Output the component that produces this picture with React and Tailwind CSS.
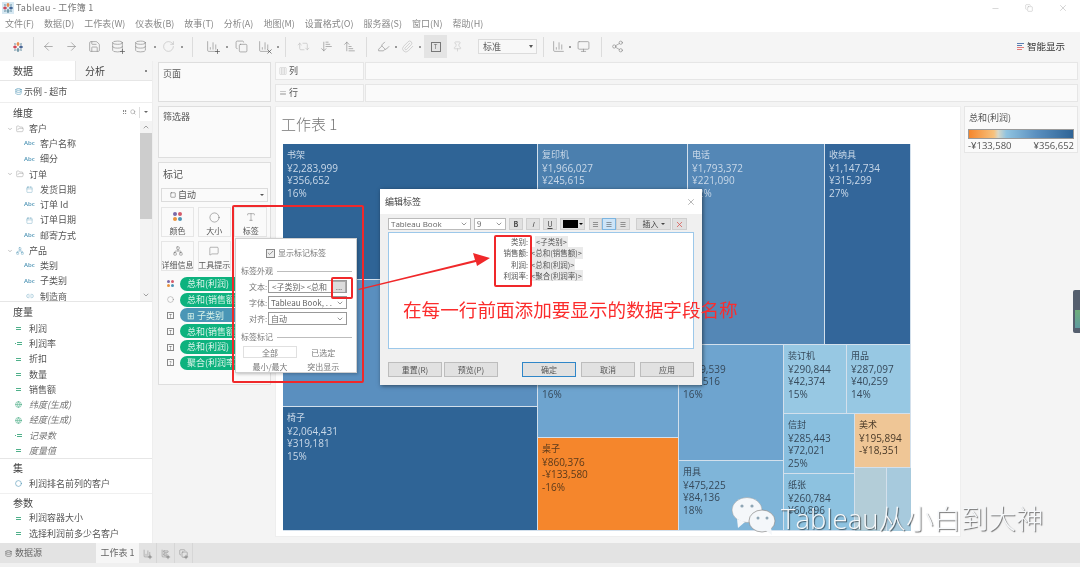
import React from 'react';
import {
  ArrowLeft, ArrowRight, Save, Database, RotateCw, Copy, Repeat2, ArrowDownNarrowWide,
  ArrowUpNarrowWide, Highlighter, Paperclip, Pin, Monitor, Share2, ChevronDown, ChevronUp, FolderOpen, Calendar, Link2,
  Globe, Search, X, Minus, Square, Check, Type, ChartColumn, ChartBarBig, Circle, MessageSquare, Network, Plus,
} from 'lucide-react';

const menus = ['文件(F)', '数据(D)', '工作表(W)', '仪表板(B)', '故事(T)', '分析(A)', '地图(M)', '设置格式(O)', '服务器(S)', '窗口(N)', '帮助(H)'];

const Logo = () => (
  <svg width="12" height="12" viewBox="0 0 12 12" strokeWidth="1.2" fill="none">
    <path d="M6 1v4M4.5 3h3" stroke="#e8762d" />
    <path d="M6 7v4M4.5 9h3" stroke="#5b879b" />
    <path d="M1 6h4M3 4.5v3" stroke="#c72035" />
    <path d="M7 6h4M9 4.5v3" stroke="#1f447e" />
    <path d="M2.5 2.5l1 1M9.5 2.5l-1 1M2.5 9.5l1-1M9.5 9.5l-1-1" stroke="#59879b" />
  </svg>
);

const Tool = ({ icon: Icon, className = 'w-[23px]', size = 13, plus, cross }) => (
  <div className={`relative flex items-center justify-center ${className}`}>
    <Icon size={size} strokeWidth={1.2} className="text-[#8a8a8a]" />
    {plus && <Plus size={7} strokeWidth={2.4} className="absolute right-[3px] bottom-[-2px] text-[#555]" />}
    {cross && <X size={7} strokeWidth={2.4} className="absolute right-[3px] bottom-[-2px] text-[#555]" />}
  </div>
);
const Dot = ({ className = 'w-[6px]' }) => (
  <div className={`flex items-center justify-center ${className}`}>
    <div className="w-[2px] h-[2px] bg-[#999]" />
  </div>
);
const Sep = ({ className = '' }) => <div className={`w-px h-[20px] bg-[#dcdcdc] ${className}`} />;

const Toolbar = () => (
  <div className="flex items-center h-[29px] bg-[#f5f5f5] pl-[12px]">
    <div className="w-[17px] flex items-center"><Logo /></div>
    <Sep className="ml-[4px] mr-[3px]" />
    <Tool icon={ArrowLeft} />
    <Tool icon={ArrowRight} />
    <Tool icon={Save} />
    <Tool icon={Database} plus />
    <Tool icon={Database} />
    <Dot />
    <Tool icon={RotateCw} className="w-[20px] opacity-50" />
    <Dot className="w-[8px]" />
    <Sep className="mx-[6px]" />
    <Tool icon={ChartColumn} className="w-[24px] ml-px" plus />
    <Dot />
    <Tool icon={Copy} />
    <Tool icon={ChartColumn} cross />
    <Dot className="w-[4px]" />
    <Sep className="mx-[5px]" />
    <Tool icon={Repeat2} className="w-[24px] opacity-50" />
    <Tool icon={ArrowDownNarrowWide} />
    <Tool icon={ArrowUpNarrowWide} />
    <Sep className="mx-[5px]" />
    <Tool icon={Highlighter} className="w-[22px]" />
    <Dot className="w-[4px]" />
    <Tool icon={Paperclip} className="w-[18px] opacity-50" />
    <Dot className="w-[8px]" />
    <div className="w-[23px] h-[23px] bg-[#e4e4e4] flex items-center justify-center">
      <div className="w-[10px] h-[10px] border border-[#777] flex items-center justify-center text-[6px] leading-none text-[#666]">T</div>
    </div>
    <Tool icon={Pin} className="w-[20px] opacity-50" size={11} />
    <div className="ml-[11px] w-[59px] h-[15px] border border-[#dcdcdc] bg-[#f8f8f8] flex items-center justify-between pl-[4px] pr-[3px] text-[9px] text-[#555]">
      标准
      <span className="w-0 h-0 border-x-[2px] border-x-transparent border-t-[3px] border-t-[#555]" />
    </div>
    <Sep className="ml-[6px] mr-[6px]" />
    <Tool icon={ChartColumn} className="w-[17px]" />
    <Dot className="w-[6px]" />
    <Tool icon={Monitor} className="w-[20px]" />
    <Sep className="ml-[8px] mr-[6px]" />
    <Tool icon={Share2} className="w-[18px]" />
    <div className="ml-auto mr-[15px] flex items-center gap-[3px] text-[9.5px] text-[#333]">
      <div className="flex flex-col gap-px w-[7px]">
        <div className="h-px w-full bg-[#5b7db0]" />
        <div className="h-px w-[5px] bg-[#5b7db0]" />
        <div className="h-px w-full bg-[#e27c7c]" />
        <div className="h-px w-[5px] bg-[#e27c7c]" />
      </div>
      智能显示
    </div>
  </div>
);

const AbcIcon = () => <span className="text-[6px] font-semibold font-['Open_Sans',sans-serif] text-[#4e94b5] w-[11px]">Abc</span>;
const DateIcon = () => <span className="w-[11px] flex justify-center"><Calendar size={7} strokeWidth={1.2} className="text-[#4e94b5]" /></span>;
const NumIcon = ({ calc }) => (
  <span className="w-[11px] flex justify-center items-center gap-px">
    {calc && <span className="w-px h-px bg-[#4fb08a]" />}
    <span className="flex flex-col gap-px"><span className="block w-[5px] h-px bg-[#4fb08a]" /><span className="block w-[5px] h-px bg-[#4fb08a]" /></span>
  </span>
);

const Group = ({ icon, label }) => (
  <div className="flex items-center h-[15.25px] pl-[7px] gap-[3px]">
    <ChevronDown size={6} className="text-[#888]" />
    {icon}
    <span className="ml-[2px]">{label}</span>
  </div>
);
const Field = ({ icon, label }) => (
  <div className="flex items-center h-[15.25px] pl-[24px] gap-[5px]">
    {icon}
    <span>{label}</span>
  </div>
);
const Measure = ({ icon, label, italic }) => (
  <div className={`flex items-center h-[15.25px] pl-[13px] gap-[5px] ${italic ? 'italic text-[#777]' : ''}`}>
    {icon}
    <span>{label}</span>
  </div>
);

const Sidebar = () => (
  <div className="w-[153px] h-full bg-white flex flex-col text-[9px] text-[#555] border-r border-[#eeeeee]">
    <div className="flex h-[20px] text-[10px] text-[#444] border-b border-[#e6e6e6] shrink-0">
      <div className="w-[75px] pl-[13px] flex items-center bg-white">数据</div>
      <div className="flex-1 pl-[9px] pr-[5px] flex items-center justify-between bg-[#f5f5f5] border-l border-[#e6e6e6]">
        分析
        <span className="w-[2px] h-[2px] bg-[#888]" />
      </div>
    </div>
    <div className="flex items-center h-[22px] pl-[15px] gap-[2px] border-b border-[#eeeeee] shrink-0">
      <Database size={7} className="text-[#4e94b5]" />
      示例 - 超市
    </div>
    <div className="flex items-center justify-between h-[18px] pl-[13px] pr-[3px] text-[10px] text-[#444] shrink-0">
      维度
      <div className="flex items-center gap-[3px] text-[#888]">
        <span className="text-[7px]">⠿</span>
        <Search size={6} />
        <span className="w-px h-[11px] bg-[#ddd]" />
        <span className="w-0 h-0 border-x-[2px] border-x-transparent border-t-[2px] border-t-[#666] mx-px" />
      </div>
    </div>
    <div className="flex h-[181px] border-b border-[#e6e6e6] overflow-hidden shrink-0">
      <div className="flex-1">
        <Group icon={<FolderOpen size={8} strokeWidth={1.2} className="text-[#888]" />} label="客户" />
        <Field icon={<AbcIcon />} label="客户名称" />
        <Field icon={<AbcIcon />} label="细分" />
        <Group icon={<FolderOpen size={8} strokeWidth={1.2} className="text-[#888]" />} label="订单" />
        <Field icon={<DateIcon />} label="发货日期" />
        <Field icon={<AbcIcon />} label="订单 Id" />
        <Field icon={<DateIcon />} label="订单日期" />
        <Field icon={<AbcIcon />} label="邮寄方式" />
        <Group icon={<Network size={8} strokeWidth={1.2} className="text-[#4e94b5]" />} label="产品" />
        <Field icon={<AbcIcon />} label="类别" />
        <Field icon={<AbcIcon />} label="子类别" />
        <Field icon={<span className="w-[11px] flex justify-center"><Link2 size={8} strokeWidth={1.2} className="text-[#4e94b5]" /></span>} label="制造商" />
      </div>
      <div className="w-[12px] bg-[#f3f3f3] flex flex-col items-center justify-between text-[#777]">
        <div className="w-full flex flex-col items-center">
          <ChevronUp size={8} className="my-[2px]" />
          <div className="w-full h-[86px] bg-[#cdcdcd]" />
        </div>
        <ChevronDown size={8} className="mb-[2px]" />
      </div>
    </div>
    <div className="flex items-center h-[18px] pl-[13px] text-[10px] text-[#444] shrink-0">度量</div>
    <div className="mt-px">
      <Measure icon={<NumIcon />} label="利润" />
      <Measure icon={<NumIcon calc />} label="利润率" />
      <Measure icon={<NumIcon />} label="折扣" />
      <Measure icon={<NumIcon />} label="数量" />
      <Measure icon={<NumIcon />} label="销售额" />
      <Measure italic icon={<span className="w-[11px] flex justify-center"><Globe size={7} className="text-[#4fb08a]" /></span>} label="纬度(生成)" />
      <Measure italic icon={<span className="w-[11px] flex justify-center"><Globe size={7} className="text-[#4fb08a]" /></span>} label="经度(生成)" />
      <Measure italic icon={<NumIcon calc />} label="记录数" />
      <Measure italic icon={<NumIcon />} label="度量值" />
    </div>
    <div className="border-t border-[#e6e6e6] h-[18px] pl-[13px] flex items-center text-[10px] text-[#444] shrink-0">集</div>
    <Measure icon={<span className="w-[11px] flex justify-center"><Circle size={7} className="text-[#4e94b5]" /></span>} label="利润排名前列的客户" />
    <div className="border-t border-[#f0f0f0] h-[18px] mt-px pl-[13px] flex items-center text-[10px] text-[#444] shrink-0">参数</div>
    <Measure icon={<NumIcon />} label="利润容器大小" />
    <Measure icon={<NumIcon />} label="选择利润前多少名客户" />
  </div>
);

const MarkBtn = ({ children, label }) => (
  <div className="flex flex-col items-center justify-between h-[30px] w-[33px] border border-[#e6e6e6] pt-[4px] text-[8px] leading-[11px] text-[#555]">
    {children}
    <span className="whitespace-nowrap">{label}</span>
  </div>
);

const Pill = ({ icon, label, blue }) => (
  <div className="flex items-center h-[15.8px]">
    <div className="w-[19px] flex justify-center">{icon}</div>
    <div className={`w-[87px] h-[14px] rounded-l-[7px] pl-[7px] flex items-center text-[9px] text-[#d8f2e8] whitespace-nowrap overflow-hidden ${blue ? 'bg-[#4a96b6]' : 'bg-[#0db27e]'}`}>{label}</div>
  </div>
);
const TBox = ({ ch = 'T' }) => <div className="w-[7px] h-[7px] border border-[#888] text-[5px] leading-[5px] text-center text-[#666]">{ch}</div>;

const Swatches = ({ size = 'w-[4px] h-[4px]' }) => (
  <div className="grid grid-cols-2 gap-px">
    <span className={`${size} rounded-full bg-[#7a6aa8]`} />
    <span className={`${size} rounded-full bg-[#d55a6a]`} />
    <span className={`${size} rounded-full bg-[#e8923c]`} />
    <span className={`${size} rounded-full bg-[#4e94b5]`} />
  </div>
);

const MiddleCol = () => (
  <div className="w-[122px] h-full bg-[#f4f4f4] pl-[5px] pr-[4px] pt-px flex flex-col gap-[4px]">
    <div className="h-[40px] border border-[#dedede] bg-[#fafafa] pl-[4px] pt-[4px] text-[9px] text-[#555]">页面</div>
    <div className="h-[52px] border border-[#dedede] bg-[#fafafa] pl-[4px] pt-[3px] text-[9px] text-[#555]">筛选器</div>
    <div className="h-[223px] border border-[#dedede] bg-[#fafafa] px-[2px] pt-[4px] text-[9px] text-[#555]">
      <div className="pl-[2px] text-[10px] leading-[14px]">标记</div>
      <div className="mt-[7px] h-[14px] border border-[#dcdcdc] flex items-center justify-between pl-[8px] pr-[3px]">
        <span className="flex items-center gap-[2px]"><Square size={6} />自动</span>
        <span className="w-0 h-0 border-x-[2px] border-x-transparent border-t-[2px] border-t-[#555]" />
      </div>
      <div className="mt-[5px] grid grid-cols-3 gap-x-[3px] gap-y-[4px]">
        <MarkBtn label="颜色"><Swatches /></MarkBtn>
        <MarkBtn label="大小"><Circle size={11} strokeWidth={1} /></MarkBtn>
        <MarkBtn label="标签"><Type size={10} strokeWidth={1} /></MarkBtn>
        <MarkBtn label="详细信息"><Network size={10} strokeWidth={1} /></MarkBtn>
        <MarkBtn label="工具提示"><MessageSquare size={10} strokeWidth={1} /></MarkBtn>
      </div>
      <div className="mt-[5px] flex flex-col">
        <Pill icon={<Swatches size="w-[3px] h-[3px]" />} label="总和(利润)" />
        <Pill icon={<Circle size={7} strokeWidth={1} />} label="总和(销售额)" />
        <Pill blue icon={<TBox />} label="⊞ 子类别" />
        <Pill icon={<TBox />} label="总和(销售额)" />
        <Pill icon={<TBox />} label="总和(利润)" />
        <Pill icon={<TBox ch="?" />} label="聚合(利润率)" />
      </div>
    </div>
  </div>
);

const Shelf = ({ icon, label }) => (
  <div className="flex h-[18px] gap-px">
    <div className="w-[89px] bg-[#fafafa] border border-[#e6e6e6] flex items-center pl-[3px] gap-[2px] text-[9px] text-[#555]">
      <span className="text-[8px] text-[#999]">{icon}</span>
      {label}
    </div>
    <div className="flex-1 bg-[#fafafa] border border-[#e6e6e6]" />
  </div>
);

const tileText = {
  light: 'text-[#c9d8e8]',
  dark: 'text-[#36495a]',
  orange: 'text-[#5a3a1c]',
  tan: 'text-[#4a3a28]',
};

const Tile = ({ className, lines = [], tone = 'light' }) => (
  <div className={`border-r border-b border-[#d3e0ec] pl-[4px] pt-[5px] leading-[12.5px] text-[10px] font-['Open_Sans','Noto_Sans_CJK_SC',sans-serif] overflow-hidden whitespace-nowrap ${tileText[tone]} ${className}`}>
    {lines.map((t, i) => (
      <div key={i} className={i === 0 ? "text-[9px] font-['Noto_Sans_CJK_SC',sans-serif]" : ''}>{t || '\u00a0'}</div>
    ))}
  </div>
);

const Treemap = () => (
  <div className="flex w-[628px] h-[387px]">
    <div className="w-[255px] flex flex-col">
      <Tile className="h-[136px] bg-[#2f6496]" lines={['书架', '¥2,283,999', '¥356,652', '16%']} />
      <Tile className="h-[127px] bg-[#5a8fbf]" />
      <Tile className="h-[124px] bg-[#2f6496]" lines={['椅子', '¥2,064,431', '¥319,181', '15%']} />
    </div>
    <div className="flex-1 flex flex-col">
      <div className="flex h-[201px]">
        <Tile className="w-[150px] bg-[#4b7fae]" lines={['复印机', '¥1,966,027', '¥245,615', '12%']} />
        <Tile className="w-[137px] bg-[#5487b6]" lines={['电话', '¥1,793,372', '¥221,090', '12%']} />
        <Tile className="w-[86px] bg-[#33669a]" lines={['收纳具', '¥1,147,734', '¥315,299', '27%']} />
      </div>
      <div className="flex flex-1">
        <div className="w-[141px] flex flex-col">
          <Tile tone="dark" className="h-[93px] bg-[#6ea4cf]" lines={['', '', '', '16%']} />
          <Tile tone="orange" className="flex-1 bg-[#f5862c]" lines={['桌子', '¥860,376', '-¥133,580', '-16%']} />
        </div>
        <div className="w-[105px] flex flex-col">
          <Tile tone="dark" className="h-[116px] bg-[#6ea4cf]" lines={['', '¥499,539', '¥80,516', '16%']} />
          <Tile tone="dark" className="flex-1 bg-[#7fb5d9]" lines={['用具', '¥475,225', '¥84,136', '18%']} />
        </div>
        <div className="flex-1 flex flex-col">
          <div className="flex h-[69px]">
            <Tile tone="dark" className="w-[63px] bg-[#97c8e3]" lines={['装订机', '¥290,844', '¥42,374', '15%']} />
            <Tile tone="dark" className="flex-1 bg-[#97c8e3]" lines={['用品', '¥287,097', '¥40,259', '14%']} />
          </div>
          <div className="flex flex-1">
            <div className="w-[71px] flex flex-col">
              <Tile tone="dark" className="h-[60px] bg-[#89bfdf]" lines={['信封', '¥285,443', '¥72,021', '25%']} />
              <Tile tone="dark" className="flex-1 bg-[#8dc2e0]" lines={['纸张', '¥260,784', '¥60,896', '']} />
            </div>
            <div className="flex-1 flex flex-col">
              <Tile tone="tan" className="h-[54px] bg-[#efc696]" lines={['美术', '¥195,894', '-¥18,351', '']} />
              <div className="flex flex-1">
                <div className="w-[32px] bg-[#b3cdd8] border-r border-[#d3e0ec]" />
                <div className="flex-1 bg-[#a7cadd]" />
              </div>
            </div>
          </div>
        </div>
      </div>
    </div>
  </div>
);

const Workspace = () => (
  <div className="flex-1 h-full bg-[#f4f4f4] pt-px pr-[2px] flex flex-col gap-[4px]">
    <Shelf icon="▥" label="列" />
    <Shelf icon="≡" label="行" />
    <div className="flex gap-[3px] flex-1 mb-[6px]">
      <div className="w-[686px] bg-white pl-[7px] pt-[7px] border border-[#eeeeee]">
        <div className="text-[15px] leading-[20px] h-[28px] font-light text-[#777] font-['Noto_Sans_CJK_SC',sans-serif] -ml-[2px] mb-[2px]">工作表 1</div>
        <Treemap />
      </div>
      <div className="flex-1 h-[47px] bg-[#fafafa] border border-[#e6e6e6] px-[3px] pt-[5px] text-[9px] text-[#555]">
        <div className="leading-[12px] pl-px">总和(利润)</div>
        <div className="mt-[5px] h-[10px] border border-[#9a9a9a] bg-[linear-gradient(90deg,#f5862c_0%,#f7c27e_24%,#d8d8c8_28%,#8fc3e0_36%,#5a8fbf_65%,#2f6496_100%)]" />
        <div className="flex justify-between leading-[12px] mt-px text-[9.5px] font-['Open_Sans',sans-serif]">
          <span>-¥133,580</span>
          <span>¥356,652</span>
        </div>
      </div>
    </div>
  </div>
);

const BottomBar = () => (
  <div className="h-[24px] shrink-0 bg-[#f0f0f0]">
    <div className="h-[20px] bg-[#e3e3e3] flex items-stretch text-[9px] text-[#666]">
      <div className="w-[96px] flex items-center pl-[5px] gap-[3px]"><Database size={7} />数据源</div>
      <div className="w-[43px] bg-[#f6f6f6] flex items-center justify-center">工作表 1</div>
      {[ChartColumn, ChartBarBig, Copy].map((I, i) => (
        <div key={i} className="relative w-[18px] border-r border-[#d6d6d6] flex items-center justify-center">
          <I size={9} strokeWidth={1.2} className="text-[#777]" />
          <Plus size={6} strokeWidth={2.2} className="absolute right-[3px] bottom-[3px] text-[#666]" />
        </div>
      ))}
    </div>
  </div>
);

const Select = ({ text, className = '' }) => (
  <div className={`h-[13px] border border-[#999] bg-white flex items-center justify-between px-[2px] text-[8px] leading-none text-[#666] whitespace-nowrap overflow-hidden ${className}`}>
    <span>{text}</span>
    <ChevronDown size={8} className="text-[#666] shrink-0" />
  </div>
);

const Rule = ({ label }) => (
  <div className="flex items-center gap-[4px] text-[8px] leading-[12px] text-[#777] pl-[5px] pr-[4px]">
    <span className="whitespace-nowrap">{label}</span>
    <div className="flex-1 h-px bg-[#bdbdbd]" />
  </div>
);

const LabelPopup = () => (
  <div className="absolute left-[235px] top-[238px] w-[122px] h-[135px] bg-white border border-[#cfcfcf] shadow-[1px_1px_3px_rgba(0,0,0,0.25)] text-[8px] text-[#777] pt-[8px]">
    <div className="flex items-center justify-center gap-[3px] h-[12px]">
      <div className="w-[9px] h-[9px] border border-[#888] bg-[#eeeeee] flex items-center justify-center"><Check size={8} className="text-[#555]" /></div>
      显示标记标签
    </div>
    <div className="mt-[6px]"><Rule label="标签外观" /></div>
    {[['文本:', null], ['字体:', 'Tableau Book, . .'], ['对齐:', '自动']].map(([k, v]) => (
      <div key={k} className="flex items-center mt-[3px] h-[13px] pl-[13px]">
        <span className="w-[19px]">{k}</span>
        {v ? (
          <Select text={v} className="w-[79px]" />
        ) : (
          <div className="w-[79px] h-[13px] border border-[#999] flex items-center pl-[3px] relative overflow-hidden whitespace-nowrap text-[#666]">
            &lt;子类别&gt; &lt;总和
            <div className="absolute right-0 top-0 w-[14px] h-[12px] bg-[#dcdcdc] border border-[#aaa] flex items-center justify-center leading-none">...</div>
          </div>
        )}
      </div>
    ))}
    <div className="mt-[6px]"><Rule label="标签标记" /></div>
    <div className="grid grid-cols-2 pl-[7px] pr-[6px] mt-[3px] text-center leading-[13px]">
      <div className="border border-[#e0e0e0] w-[54px] h-[12px] leading-[11px]">全部</div>
      <div>已选定</div>
      <div className="mt-[1px] w-[54px]">最小/最大</div>
      <div className="mt-[1px]">突出显示</div>
    </div>
  </div>
);

const FmtBtn = ({ children, className = 'w-[14px]' }) => (
  <div className={`h-[12px] bg-[#e1e1e1] border border-[#cfcfcf] flex items-center justify-center text-[7px] leading-none text-[#444] ${className}`}>{children}</div>
);

const DlgBtn = ({ children, primary }) => (
  <div className={`w-[54px] h-[15px] flex items-center justify-center text-[8px] text-[#555] bg-[#e1e1e1] border ${primary ? 'border-[#2f86c8]' : 'border-[#bdbdbd]'}`}>{children}</div>
);

const chip = 'bg-[#eaeaea] px-px';
const EditLine = ({ name, value, className = '' }) => (
  <div className="flex h-[11.3px] leading-[11.3px]">
    <span className="w-[139px] text-right text-[#555]">{name}</span>
    <span className={`${chip} ${className}`}>{value}</span>
  </div>
);

const EditDialog = () => (
  <div className="absolute left-[380px] top-[189px] w-[322px] h-[196px] bg-[#f0f0f0] shadow-[1px_1px_4px_rgba(0,0,0,0.5)] text-[#555]">
    <div className="h-[25px] bg-white flex items-center justify-between pl-[5px] pr-[6px] text-[9px] text-[#444]">
      编辑标签
      <X size={10} strokeWidth={1} className="text-[#555]" />
    </div>
    <div className="flex items-center mt-[4px] pl-[8px] h-[12px]">
      <Select text="Tableau Book" className="w-[83px] !h-[12px] border-[#bbbbbb] text-[8px] font-['Open_Sans',sans-serif]" />
      <Select text="9" className="w-[32px] !h-[12px] border-[#bbbbbb] ml-[3px]" />
      <div className="flex gap-[3px] ml-[3px]">
        <FmtBtn><b>B</b></FmtBtn>
        <FmtBtn><i>I</i></FmtBtn>
        <FmtBtn><u>U</u></FmtBtn>
      </div>
      <div className="ml-[3px] w-[25px] h-[12px] border border-[#cfcfcf] bg-[#e1e1e1] flex items-center gap-px pl-[2px]">
        <span className="w-[15px] h-[8px] bg-black" />
        <span className="w-0 h-0 border-x-[2px] border-x-transparent border-t-[2px] border-t-black" />
      </div>
      <div className="flex ml-[4px]">
        <FmtBtn className="w-[13px]">≡</FmtBtn>
        <FmtBtn className="w-[14px] !bg-[#cde4f7] !border-[#7db5e0]">≡</FmtBtn>
        <FmtBtn className="w-[14px]">≡</FmtBtn>
      </div>
      <FmtBtn className="w-[35px] ml-[6px] gap-[2px] !text-[8px]">插入<span className="w-0 h-0 border-x-[2px] border-x-transparent border-t-[2px] border-t-[#444]" /></FmtBtn>
      <FmtBtn className="w-[15px] ml-px"><X size={9} className="text-[#d9534f]" /></FmtBtn>
    </div>
    <div className="mx-[8px] mt-[2px] h-[117px] bg-white border border-[#9cc8ea] pt-[3px] text-[7.5px]">
      <EditLine name="类别:" value="<子类别>" className="ml-[7px]" />
      <EditLine name="销售额:" value="<总和(销售额)>" className="ml-[2px]" />
      <EditLine name="利润:" value="<总和(利润)>" className="ml-[2px]" />
      <EditLine name="利润率:" value="<聚合(利润率)>" className="ml-[2px]" />
    </div>
    <div className="flex items-center mt-[13px] pl-[8px] pr-[8px]">
      <div className="flex gap-[2px]"><DlgBtn>重置(R)</DlgBtn><DlgBtn>预览(P)</DlgBtn></div>
      <div className="ml-auto flex gap-[5px]"><DlgBtn primary>确定</DlgBtn><DlgBtn>取消</DlgBtn><DlgBtn>应用</DlgBtn></div>
    </div>
  </div>
);

const Annotations = () => (
  <>
    <div className="absolute left-[232px] top-[205px] w-[132px] h-[178px] border-2 border-[#f0282a] rounded-[2px]" />
    <div className="absolute left-[331px] top-[277px] w-[22px] h-[22px] border-2 border-[#f0282a] rounded-[2px]" />
    <div className="absolute left-[494px] top-[235px] w-[38px] h-[52px] border-2 border-[#f0282a] rounded-[2px]" />
    <svg className="absolute left-[355px] top-[250px]" width="140" height="45" viewBox="0 0 140 45">
      <path d="M3 39L120 10L118 3L135 8L122 16L121 12L4 40Z" fill="#f0282a" />
    </svg>
    <div className="absolute left-[403px] top-[296px] text-[18.6px] leading-[26px] text-[#fb2c2c] whitespace-nowrap">在每一行前面添加要显示的数据字段名称</div>
  </>
);

const Watermark = () => (
  <>
    <svg className="absolute left-[731px] top-[497px]" width="46" height="40" viewBox="0 0 46 40">
      <ellipse cx="16" cy="13" rx="15" ry="12.5" fill="#f4f7fa" stroke="#9a9a9a" strokeWidth="0.5" />
      <path d="M6 22l1 9 7-6z" fill="#f4f7fa" />
      <circle cx="11" cy="9" r="1.6" fill="#8fa6b5" />
      <circle cx="21" cy="9" r="1.6" fill="#8fa6b5" />
      <ellipse cx="31" cy="24" rx="13" ry="11" fill="#f4f7fa" stroke="#8a8a8a" strokeWidth="0.7" />
      <path d="M34 33l7 5-1-8z" fill="#f4f7fa" />
      <circle cx="27" cy="21" r="1.5" fill="#8fa6b5" />
      <circle cx="36" cy="21" r="1.5" fill="#8fa6b5" />
    </svg>
    <div className="absolute left-[781px] top-[500px] text-[27.5px] leading-[38px] font-light text-[#f6f8fa] whitespace-nowrap font-['Open_Sans','Noto_Sans_CJK_SC',sans-serif] [text-shadow:1px_1px_1px_rgba(0,0,0,0.55)]">
      Tableau从小白到大神
    </div>
  </>
);

export default function App() {
  return (
    <div className="relative w-[1080px] h-[567px] overflow-hidden bg-white flex flex-col blur-[0.35px] font-['Noto_Sans_CJK_SC','Noto_Sans',sans-serif]">
      <div className="h-[16px] flex items-center pl-[2px] gap-[2px] text-[9px] text-[#777] shrink-0">
        <div className="w-[12px] h-[12px] bg-[#d7e8f2] flex items-center justify-center"><Logo /></div>
        <span className="tracking-[0.2px]">Tableau - 工作簿 1</span>
        <div className="ml-auto flex items-center">
          <div className="w-[34px] flex justify-center"><Minus size={9} strokeWidth={1} className="text-[#999]" /></div>
          <div className="w-[34px] flex justify-center"><Copy size={8} strokeWidth={1} className="text-[#999]" /></div>
          <div className="w-[34px] flex justify-center"><X size={10} strokeWidth={1} className="text-[#999]" /></div>
        </div>
      </div>
      <div className="h-[16px] flex items-center pl-[5px] gap-[10px] text-[9px] text-[#888] shrink-0">
        {menus.map((m) => <span key={m}>{m}</span>)}
      </div>
      <Toolbar />
      <div className="flex-1 flex min-h-0">
        <Sidebar />
        <MiddleCol />
        <Workspace />
      </div>
      <BottomBar />
      <LabelPopup />
      <EditDialog />
      <Annotations />
      <div className="absolute right-0 top-[290px] w-[7px] h-[43px] rounded-l-[2px] bg-[#555f6e] pt-[20px] pl-[2px]">
        <div className="h-[18px] bg-[linear-gradient(180deg,#6fae7a,#5f9aa0)]" />
      </div>
      <Watermark />
    </div>
  );
}
